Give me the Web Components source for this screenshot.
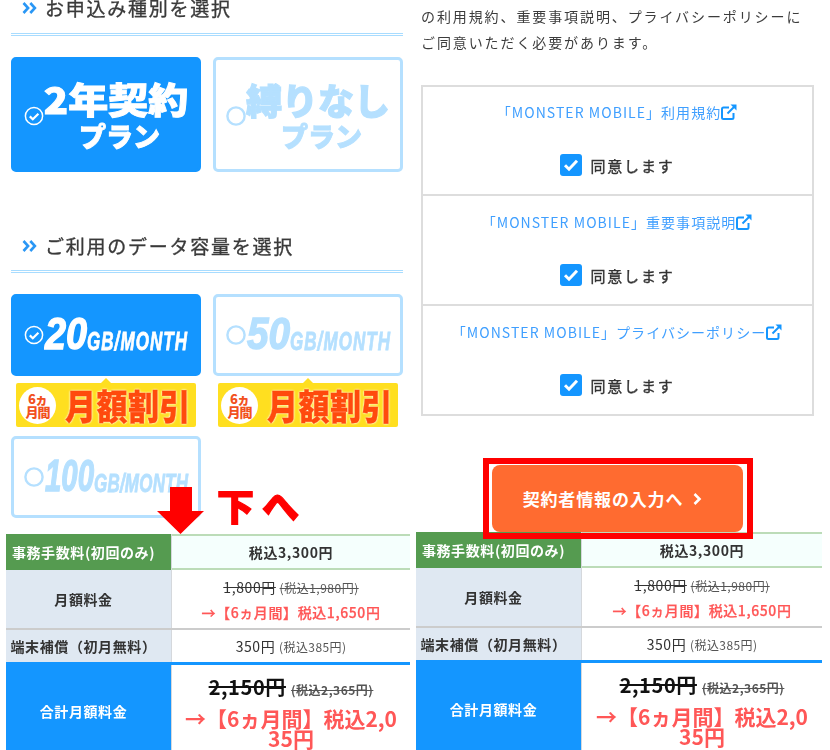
<!DOCTYPE html>
<html lang="ja"><head><meta charset="utf-8"><title>MONSTER MOBILE</title>
<style>
html,body{margin:0;padding:0;background:#fff}
body{font-family:"Noto Sans CJK JP","Noto Sans",sans-serif;color:#333}
</style></head><body>
<x-page>
  <x-col-left slot="left">
    <x-heading first>お申込み種別を選択</x-heading>
    <x-card-grid>
      <x-plan-card selected size="40" sy=".9" main="2年契約" sub="プラン"></x-plan-card>
      <x-plan-card size="36" sy="1" main="縛りなし" sub="プラン"></x-plan-card>
    </x-card-grid>
    <x-heading style="margin-top:61px">ご利用のデータ容量を選択</x-heading>
    <x-card-grid>
      <div><x-data-card selected num="20" nw="42" uw="100"></x-data-card><x-discount></x-discount></div>
      <div><x-data-card num="50" nw="43" uw="100"></x-data-card><x-discount></x-discount></div>
      <div style="margin-top:9px"><x-data-card num="100" nw="49" uw="94"></x-data-card></div>
    </x-card-grid>
    <x-price-table style="margin:16px 0 0 -5px;width:404px">
      <x-scroll-hint slot="over"></x-scroll-hint>
      <x-price-row kind="fee" label="事務手数料(初回のみ)"><b>税込3,300円</b></x-price-row>
      <x-price-row kind="month" label="月額料金"><x-was>1,800円<span slot="tax">(税込1,980円)</span></x-was><x-promo>→【6ヵ月間】税込1,650円</x-promo></x-price-row>
      <x-price-row kind="device" label="端末補償（初月無料）">350円 <small>(税込385円)</small></x-price-row>
      <x-price-row kind="total" label="合計月額料金"><x-was big>2,150円<span slot="tax">(税込2,365円)</span></x-was><x-promo big>→【6ヵ月間】税込2,035円</x-promo></x-price-row>
    </x-price-table>
  </x-col-left>
  <x-col-right slot="right">
    <x-intro>の利用規約、重要事項説明、プライバシーポリシーにご同意いただく必要があります。</x-intro>
    <x-agree-box>
      <x-agree-row>「MONSTER MOBILE」利用規約</x-agree-row>
      <x-agree-row>「MONSTER MOBILE」重要事項説明</x-agree-row>
      <x-agree-row>「MONSTER MOBILE」プライバシーポリシー</x-agree-row>
    </x-agree-box>
    <x-next-button>契約者情報の入力へ</x-next-button>
    <x-price-table style="margin-left:-5px;width:406px;position:relative;z-index:0">
      <x-price-row kind="fee" label="事務手数料(初回のみ)"><b>税込3,300円</b></x-price-row>
      <x-price-row kind="month" label="月額料金"><x-was>1,800円<span slot="tax">(税込1,980円)</span></x-was><x-promo>→【6ヵ月間】税込1,650円</x-promo></x-price-row>
      <x-price-row kind="device" label="端末補償（初月無料）">350円 <small>(税込385円)</small></x-price-row>
      <x-price-row kind="total" label="合計月額料金"><x-was big>2,150円<span slot="tax">(税込2,365円)</span></x-was><x-promo big>→【6ヵ月間】税込2,035円</x-promo></x-price-row>
    </x-price-table>
  </x-col-right>
</x-page>
<script>
const FONT='"Noto Sans CJK JP","Noto Sans",sans-serif';
function def(name,html){
  customElements.define(name,class extends HTMLElement{
    constructor(){super();const r=this.attachShadow({mode:'open'});r.innerHTML=typeof html==='function'?html(this):html;}
    connectedCallback(){ if(typeof html==='function'){this.shadowRoot.innerHTML=html(this);} }
  });
}
const BLUE='#1496ff',PALE='#b5e0ff';
const checkCircle=(c,sel)=>`<svg width="20" height="20" viewBox="0 0 20 20" style="flex:none"><circle cx="10" cy="10" r="8.6" fill="none" stroke="${c}" stroke-width="${sel?1.5:2.4}"/>${sel?`<path d="M5.800 10.400l3 2.900 5.600-5.600" fill="none" stroke="${c}" stroke-width="2.200"/>`:''}</svg>`;

def('x-page',`<style>:host{display:grid;grid-template-columns:415px 415px;width:830px;height:750px;overflow:hidden;filter:blur(.45px)}
.l,.r{min-width:0;height:750px;overflow:hidden}</style><div class="l"><slot name="left"></slot></div><div class="r"><slot name="right"></slot></div>`);
def('x-col-left',`<style>:host{display:block;padding-left:11px;width:392px}</style><slot></slot>`);
def('x-col-right',`<style>:host{display:block;padding:3px 0 0 6px;width:393px}</style><slot></slot>`);
def('x-heading',`<style>:host{display:flex;align-items:center;height:26px;padding-bottom:11px;border-bottom:3px double #a8dcff;margin-bottom:21px;padding-left:11px;gap:8px;
font:400 19px/26px ${FONT};letter-spacing:1.75px;color:#3a3a3a;-webkit-text-stroke:.35px #3a3a3a;white-space:nowrap}
:host([first]){margin-top:-5px;padding-bottom:12px}
svg{flex:none}</style><svg width="15" height="12" viewBox="0 0 15 12"><path d="M1.500 1l4.600 5-4.600 5M8.300 1l4.600 5-4.600 5" fill="none" stroke="#2a97f5" stroke-width="2.600"/></svg><slot></slot>`);
def('x-card-grid',`<style>:host{display:grid;grid-template-columns:190px 190px;column-gap:12px}</style><slot></slot>`);
def('x-plan-card',h=>{const s=h.hasAttribute('selected');const c=s?'#fff':PALE;const z=h.getAttribute('size'),sy=h.getAttribute('sy');return `<style>:host{display:flex;align-items:center;justify-content:center;box-sizing:border-box;height:115px;border-radius:5px;border:3px solid ${s?BLUE:PALE};background:${s?BLUE:'#fff'};color:${c};font-family:${FONT}}
.t{display:flex;flex-direction:column;align-items:center}
.m{font-weight:900;font-size:${z}px;line-height:44px;-webkit-text-stroke:1.1px ${c};white-space:nowrap;margin-top:-2px;transform:scaleY(${sy})}
.s{font-weight:900;font-size:27px;line-height:30px;-webkit-text-stroke:.9px ${c};white-space:nowrap;margin-left:7px}
</style><span style="margin-top:2px;display:flex">${checkCircle(c,s)}</span><div class="t"><span class="m">${h.getAttribute('main')}</span><span class="s">${h.getAttribute('sub')}</span></div>`});
def('x-data-card',h=>{const s=h.hasAttribute('selected');const c=s?'#fff':PALE;const nw=+h.getAttribute('nw'),uw=+h.getAttribute('uw');const sx=.68;return `<style>:host{display:flex;align-items:center;box-sizing:border-box;height:82px;border-radius:5px;border:3px solid ${s?BLUE:PALE};background:${s?BLUE:'#fff'};padding-left:10px}
text{font-family:"Liberation Sans",sans-serif;font-weight:700;font-style:italic;fill:${c};stroke:${c}}
</style>${checkCircle(c,s)}<svg width="150" height="40" viewBox="0 0 150 40" style="flex:none"><text x="1" y="34" font-size="45" stroke-width="1.400" textLength="${nw}" lengthAdjust="spacingAndGlyphs">${h.getAttribute('num')}</text><text transform="translate(${1+nw} 35) scale(${sx} 1)" font-size="25" stroke-width=".8" textLength="${uw/sx}" lengthAdjust="spacing">GB/MONTH</text></svg>`});
def('x-discount',`<style>:host{display:flex;position:relative;align-items:center;box-sizing:border-box;height:44px;margin:7px 5px 0;background:#ffdf20;border-radius:2px;font-family:${FONT}}
:host::before{content:"";position:absolute;left:calc(50% - 5px);top:-5px;border:5px solid transparent;border-top:0;border-bottom-color:#ffdf20}
.c{flex:none;width:37px;height:37px;border-radius:50%;background:#fff;margin-left:3px;color:#f2511e;display:flex;flex-direction:column;align-items:center;justify-content:center;font-weight:900;font-size:13px;line-height:13px;letter-spacing:-1px;white-space:nowrap}
.m{margin-left:9px;font-weight:900;font-size:31px;line-height:40px;color:#ff4a0d;letter-spacing:.5px;display:inline-block;transform:scaleY(1.14);-webkit-text-stroke:.3px #ff4a0d;text-shadow:0 0 2px #fff,0 0 2px #fff;white-space:nowrap}
</style><span class="c"><span>6ヵ</span><span>月間</span></span><span class="m">月額割引</span>`);
def('x-scroll-hint',`<style>:host{display:flex;position:absolute;left:151px;bottom:100%;align-items:flex-start;gap:13px;pointer-events:none}
span{font:900 37px/46px ${FONT};letter-spacing:8px;color:#f00;-webkit-text-stroke:1.2px #f00;white-space:nowrap;margin-top:-5px}
</style><svg width="47" height="47" viewBox="0 0 47 47" style="flex:none"><path d="M13 0h22v24h12L23.500 47 0 24h13z" fill="#f00"/></svg><span>下へ</span>`);
def('x-price-table',`<style>:host{display:block;position:relative}</style><slot></slot><slot name="over"></slot>`);
def('x-price-row',h=>{const k=h.getAttribute('kind');
const H={fee:36,month:58,device:34,total:94}[k];
const L={fee:'background:#559b50;color:#fff;',month:'background:#dfe8f2;',device:'background:#dfe8f2;',total:`background:${BLUE};color:#fff;`}[k];
const R={fee:'background:#f5fffd;border-top:2px solid #bcdcb8;border-bottom:2px solid #bcdcb8;',month:'background:#fff;',device:'background:#fff;',total:'background:#fff;justify-content:flex-start;padding:9px 7px 0;'}[k];
const bd=k==='total'?`border-top:3px solid ${BLUE};`:(k==='device'?'border-top:2px solid #ccc;':'');
return `<style>:host{display:grid;grid-template-columns:166px 1fr;box-sizing:border-box;height:${H}px;${bd}font-family:${FONT}}
.l{box-sizing:border-box;display:flex;align-items:center;justify-content:center;padding-right:10px;font-weight:700;font-size:14px;letter-spacing:.6px;color:#333;white-space:nowrap;border-right:1px solid #d5d8dc;${L}}
.r{box-sizing:border-box;display:flex;flex-direction:column;align-items:center;justify-content:center;text-align:center;font-size:14px;letter-spacing:.6px;color:#333;min-width:0;padding:0 4px;${R}}
::slotted(b){font-weight:700}
::slotted(small){font-size:12px;color:#555;letter-spacing:.4px}
</style><div class="l">${h.getAttribute('label')}</div><div class="r"><div style="width:100%"><slot></slot></div></div>`});
def('x-was',h=>{const b=h.hasAttribute('big');return `<style>:host{display:block;color:${b?'#111':'#333'};font-size:${b?20:14}px;line-height:${b?26:22}px;font-weight:${b?700:400};letter-spacing:.6px;white-space:nowrap}
.t{font-size:12px;font-weight:${b?700:400};color:#555;text-decoration:line-through;letter-spacing:.5px}
s{text-decoration:line-through}</style><s><slot></slot></s> <span class="t"><slot name="tax"></slot></span>`});
def('x-promo',h=>{const b=h.hasAttribute('big');return `<style>:host{display:block;color:#ff5757;font-weight:${b?700:500};font-size:${b?21:14}px;line-height:${b?20:22}px;letter-spacing:${b?0:.6}px;word-break:break-all;margin-top:${b?5:2}px;${b?'width:224px;margin-left:auto;margin-right:auto;':'-webkit-text-stroke:.25px #ff5757;'}}</style><slot></slot>`});
def('x-intro',`<style>:host{display:block;font-size:14px;line-height:26px;letter-spacing:1.9px;color:#3c3c3c;font-family:${FONT};width:392px}</style><slot></slot>`);
def('x-agree-box',`<style>:host{display:block;box-sizing:border-box;width:393px;margin-top:30px;border:2px solid #ddd}</style><slot></slot>`);
def('x-agree-row',`<style>:host{display:flex;flex-direction:column;align-items:center;box-sizing:border-box;height:110px;border-top:2px solid #ddd;font-family:${FONT};--link-top:13px;--check-top:29px}
:host(:first-child){border-top:0;height:107px;--link-top:12px;--check-top:29px}
a{display:flex;align-items:center;margin-top:var(--link-top);height:26px;font-size:14px;letter-spacing:1.05px;color:#3f9fff;text-decoration:none;white-space:nowrap}
.c{display:flex;align-items:center;gap:8px;margin-top:var(--check-top);font-weight:400;font-size:15px;letter-spacing:1.8px;color:#333;-webkit-text-stroke:.35px #333}
.b{width:22px;height:22px;border-radius:3px;background:${BLUE};display:flex;align-items:center;justify-content:center}
</style><a href="#"><slot></slot><svg width="18" height="18" viewBox="0 0 18 18" style="flex:none;margin-left:-1px"><path d="M9 4.500H3.500A1.500 1.500 0 0 0 2 6v8.500A1.500 1.500 0 0 0 3.500 16h8.500a1.500 1.500 0 0 0 1.500-1.500V10" fill="none" stroke="${BLUE}" stroke-width="2"/><path d="M7.500 10.500L15 3" stroke="${BLUE}" stroke-width="2" fill="none"/><path d="M10.500 1.500h6v6z" fill="${BLUE}"/></svg></a><div class="c"><span class="b"><svg width="16" height="14" viewBox="0 0 16 14"><path d="M2 7.200l4 4 8-8.500" fill="none" stroke="#fff" stroke-width="3"/></svg></span><span>同意します</span></div>`);
def('x-next-button',`<style>:host{display:flex;position:relative;z-index:1;box-sizing:border-box;width:251px;height:67px;margin:49px 0 0 71px;padding-right:10px;align-items:center;justify-content:center;gap:10px;background:#ff6b30;border-radius:8px;color:#fff;font:700 17px/20px ${FONT};letter-spacing:.85px;white-space:nowrap}
i{position:absolute;left:-9px;right:-10px;top:-7px;bottom:-7px;border:6px solid #f00;pointer-events:none}
svg{flex:none}</style><span><slot></slot></span><svg width="9" height="12" viewBox="0 0 9 12"><path d="M1.500 1l5 5-5 5" fill="none" stroke="#fff" stroke-width="2.600"/></svg><i></i>`);
</script>
</body></html>
